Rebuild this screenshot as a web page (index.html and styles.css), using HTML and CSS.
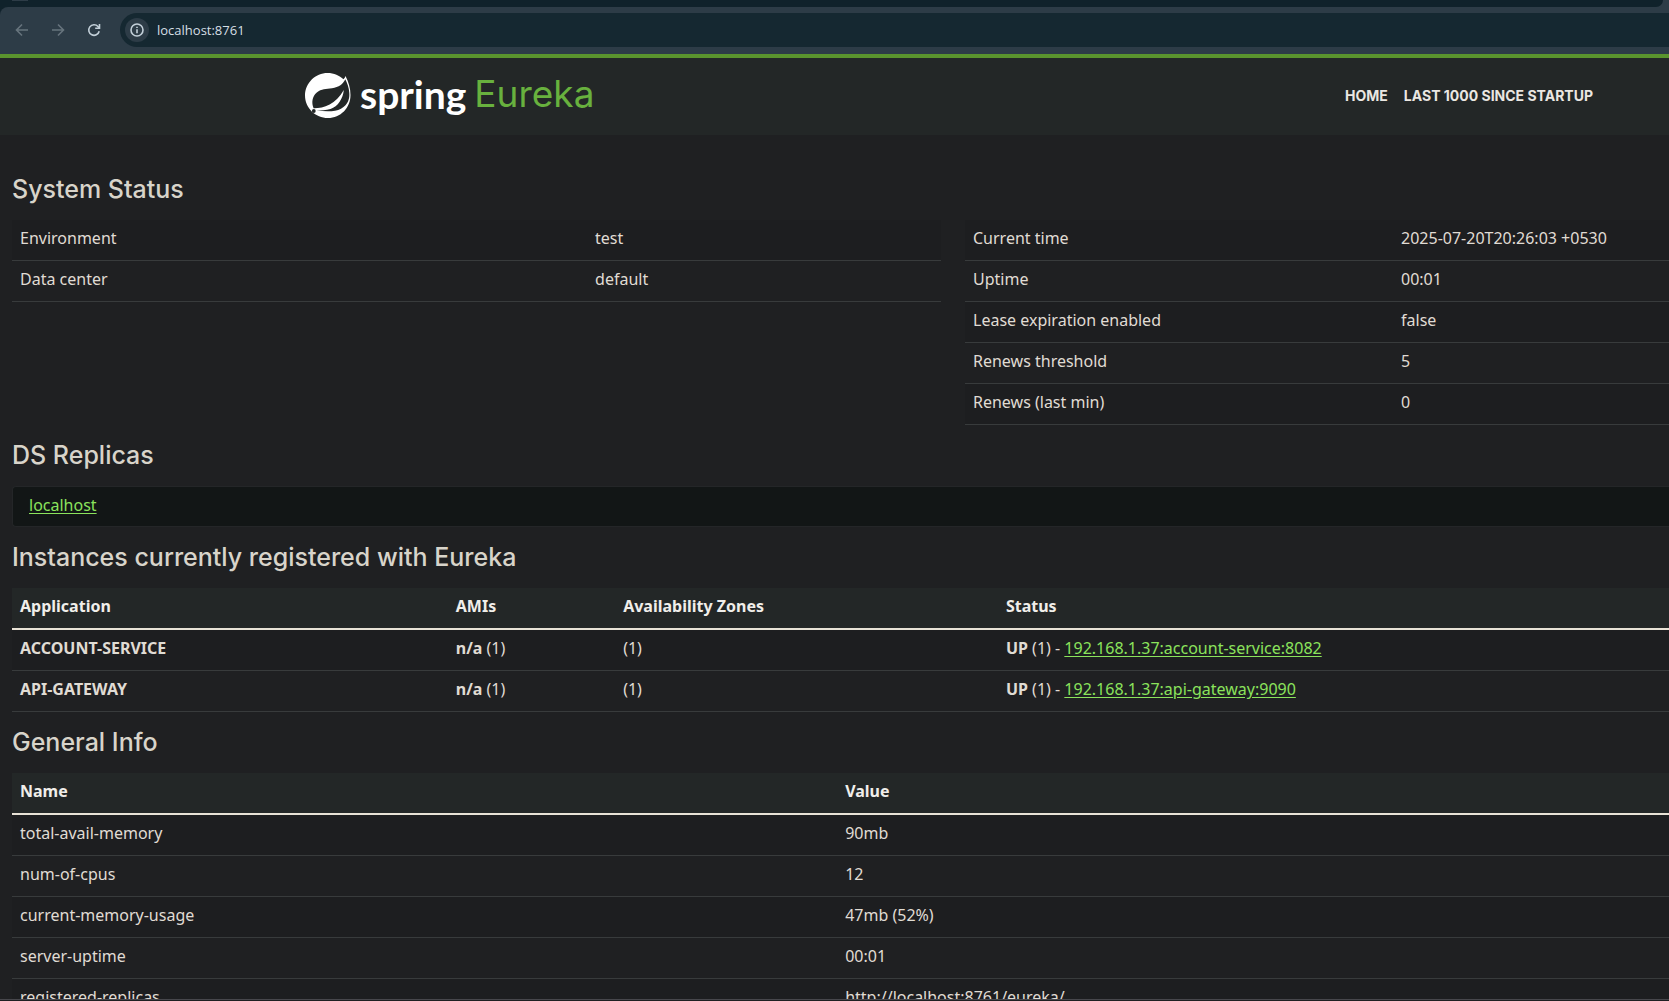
FILE: index.html
```html
<!DOCTYPE html>
<html lang="en">
<head>
<meta charset="utf-8">
<title>Eureka</title>
<link rel="stylesheet" href="styles.css">
</head>
<body>
<div class="window">
  <header class="browser">
    <div class="tab-strip"><div class="tab-strip-inner"><span class="tab-button"></span></div></div>
    <div class="toolbar">
      <button class="tool dim" aria-label="Back">
        <svg viewBox="0 0 16 16"><path d="M14 8H3M8 2.500L2.500 8L8 13.500"/></svg>
      </button>
      <button class="tool dim" aria-label="Forward">
        <svg viewBox="0 0 16 16"><path d="M2 8H13M8 2.500L13.500 8L8 13.500"/></svg>
      </button>
      <button class="tool" aria-label="Reload">
        <svg viewBox="0 0 16 16"><path d="M13.200 9.300A5.300 5.300 0 1 1 12 4.500L13.300 6"/><path d="M13.500 2V6.300H9.200"/></svg>
      </button>
      <div class="address">
        <button class="site-info" aria-label="Site information">
          <svg viewBox="0 0 16 16"><circle cx="8" cy="8" r="6"/><path d="M8 7.200V11.200M8 4.700V6.100"/></svg>
        </button>
        <input class="url" type="text" aria-label="Address" value="localhost:8761">
      </div>
    </div>
  </header>
  <nav class="navbar">
    <a class="brand" href="#" aria-label="Spring Eureka">
      <svg class="leaf" viewBox="0 0 46 46">
        <path class="leaf-white" d="M40.500 3C43.500 9 45.500 15 45.500 22C45.500 35 35.500 45 23 45C10.500 45 0 35 0 22.500C0 10 10.500 0 22.500 0C29 0 34.500 2.500 38.500 6.300Q40 5 40.500 3Z"/>
        <path class="leaf-dark" d="M40.300 6.200C38 11 34 14.200 27 15.200C21 16 16.500 15.500 11.800 19.500C7.200 23.500 6.300 29.500 8.600 35.300C18 35.500 31 31.500 38.800 17C38 25.500 33 33.500 25.500 36C21 37.500 16 37.400 11.500 37.800C20 38.300 30 39.300 36 35.800C43.500 31.500 44.700 25 44.300 20C44 14.500 42.200 9.800 40.300 6.200Z"/>
        <circle class="leaf-dark" cx="8.800" cy="38" r="1.900"/>
      </svg>
      <span class="spring">spring</span>
      <span class="eureka">Eureka</span>
    </a>
    <div class="links">
      <a href="#">HOME</a>
      <a href="#">LAST 1000 SINCE STARTUP</a>
    </div>
  </nav>
  <main class="content">
    <h1>System Status</h1>
    <div class="status-grid">
      <table class="data env">
        <tbody>
          <tr><td>Environment</td><td>test</td></tr>
          <tr><td>Data center</td><td>default</td></tr>
        </tbody>
      </table>
      <table class="data timing">
        <tbody>
          <tr><td>Current time</td><td>2025-07-20T20:26:03 +0530</td></tr>
          <tr><td>Uptime</td><td>00:01</td></tr>
          <tr><td>Lease expiration enabled</td><td>false</td></tr>
          <tr><td>Renews threshold</td><td>5</td></tr>
          <tr><td>Renews (last min)</td><td>0</td></tr>
        </tbody>
      </table>
    </div>
    <h1>DS Replicas</h1>
    <ul class="replicas"><li><a href="#">localhost</a></li></ul>
    <h1>Instances currently registered with Eureka</h1>
    <table class="data instances">
      <thead><tr><th>Application</th><th>AMIs</th><th>Availability Zones</th><th>Status</th></tr></thead>
      <tbody>
        <tr><td><b>ACCOUNT-SERVICE</b></td><td><b>n/a</b> (1)</td><td>(1)</td><td><b>UP</b> (1) - <a href="#">192.168.1.37:account-service:8082</a></td></tr>
        <tr><td><b>API-GATEWAY</b></td><td><b>n/a</b> (1)</td><td>(1)</td><td><b>UP</b> (1) - <a href="#">192.168.1.37:api-gateway:9090</a></td></tr>
      </tbody>
    </table>
    <h1>General Info</h1>
    <table class="data general">
      <thead><tr><th>Name</th><th>Value</th></tr></thead>
      <tbody>
        <tr><td>total-avail-memory</td><td>90mb</td></tr>
        <tr><td>num-of-cpus</td><td>12</td></tr>
        <tr><td>current-memory-usage</td><td>47mb (52%)</td></tr>
        <tr><td>server-uptime</td><td>00:01</td></tr>
        <tr><td>registered-replicas</td><td>http://localhost:8761/eureka/</td></tr>
      </tbody>
    </table>
  </main>
  <div class="window-edge"></div>
</div>
</body>
</html>
```
FILE: styles.css
```css
* { box-sizing: border-box; }

body {
  margin: 0;
  background: #1f2022;
  color: #e0dcd4;
  font: 16px/24px "Noto Sans", "Open Sans", sans-serif;
}

.window {
  display: flex;
  flex-direction: column;
  height: 100vh;
  overflow: hidden;
}

/* Browser chrome */
.browser { flex: none; background: #10222b; }
.tab-strip { background: #2d3c47; }
.tab-strip-inner {
  height: 7px;
  margin-right: 6px;
  padding-left: 12px;
  background: #10222b;
  border-bottom-right-radius: 8px;
}
.tab-button {
  display: block;
  width: 16px;
  height: 1px;
  background: #2d3c47;
}
.toolbar {
  display: flex;
  align-items: center;
  gap: 12px;
  height: 47px;
  padding: 0 0 1px 10px;
  background: #2d3c47;
  border-top-left-radius: 8px;
}
button {
  display: grid;
  place-items: center;
  flex: none;
  width: 24px;
  height: 24px;
  padding: 0;
  border: 0;
  border-radius: 50%;
  background: none;
  color: #c3d0d9;
}
button svg {
  width: 16px;
  height: 16px;
  fill: none;
  stroke: currentColor;
  stroke-width: 1.6;
}
.dim { color: #66747d; }
.address {
  display: flex;
  align-items: center;
  gap: 8px;
  flex: 1;
  height: 34px;
  margin-left: 2px;
  padding-left: 5px;
  background: #152831;
  border-radius: 17px 0 0 17px;
}
.site-info { background: #2d3c47; }
.url {
  flex: 1;
  padding: 0;
  border: 0;
  outline: 0;
  background: none;
  color: #d5dfe5;
  font: 13px/20px "Open Sans", sans-serif;
}

/* Spring bar */
.navbar {
  display: flex;
  flex: none;
  align-items: center;
  justify-content: space-between;
  height: 81px;
  padding: 0 76px 1px 305px;
  border-top: 4px solid #5a942e;
  background: #232727;
}
.brand {
  display: flex;
  align-items: center;
  text-decoration: none;
  line-height: 44px;
}
.leaf { width: 46px; height: 46px; margin-right: 9px; }
.leaf-white { fill: #fff; }
.leaf-dark { fill: #232727; }
.spring, .eureka { margin-bottom: 4px; }
.spring { margin-right: 8px; color: #fff; font-family: Lato, sans-serif; font-size: 39px; font-weight: 700; }
.eureka { color: #68b13e; font-family: Inter, sans-serif; font-size: 37px; }
.links { display: flex; gap: 16px; }
.links a {
  color: #ebe7e2;
  font: 700 14px/24px Inter, sans-serif;
  text-decoration: none;
}

/* Page */
.content {
  flex: 1;
  min-height: 0;
  overflow: hidden;
  padding: 40px 0 0 12px;
}
h1 {
  margin: 0 0 16px;
  color: #d8d4ca;
  font: 500 25px/29px Inter, sans-serif;
}
.data {
  width: 100%;
  border-collapse: separate;
  border-spacing: 0;
  table-layout: fixed;
}
.data td, .data th {
  height: 41px;
  padding: 6px 8px 10px;
  border-bottom: 1px solid #383b3c;
  text-align: left;
  white-space: nowrap;
}
.data th {
  border-bottom: 2px solid #e8e2d6;
  background: #232727;
  color: #f0eeea;
}
.data tbody tr:nth-child(odd) { background: #1d1e20; }
.status-grid {
  display: grid;
  grid-template-columns: 929fr 704fr;
  gap: 24px;
  align-items: start;
  margin-bottom: 16px;
}
.env td:first-child { width: 61.9%; }
.timing td:first-child { width: 60.8%; }
.instances { margin-bottom: 16px; }
.instances th:nth-child(1) { width: 26.3%; }
.instances th:nth-child(2) { width: 10.1%; }
.instances th:nth-child(3) { width: 23.1%; }
.general th:first-child { width: 49.8%; }
a { color: #8be35c; text-underline-offset: 2px; }
.replicas {
  margin: 0 0 16px;
  padding: 6px 16px 9px;
  border: 1px solid #242628;
  border-right: 0;
  border-radius: 4px 0 0 4px;
  background: #121616;
  list-style: none;
}
.window-edge {
  flex: none;
  height: 2px;
  border-top: 1px solid #47474c;
}
```
